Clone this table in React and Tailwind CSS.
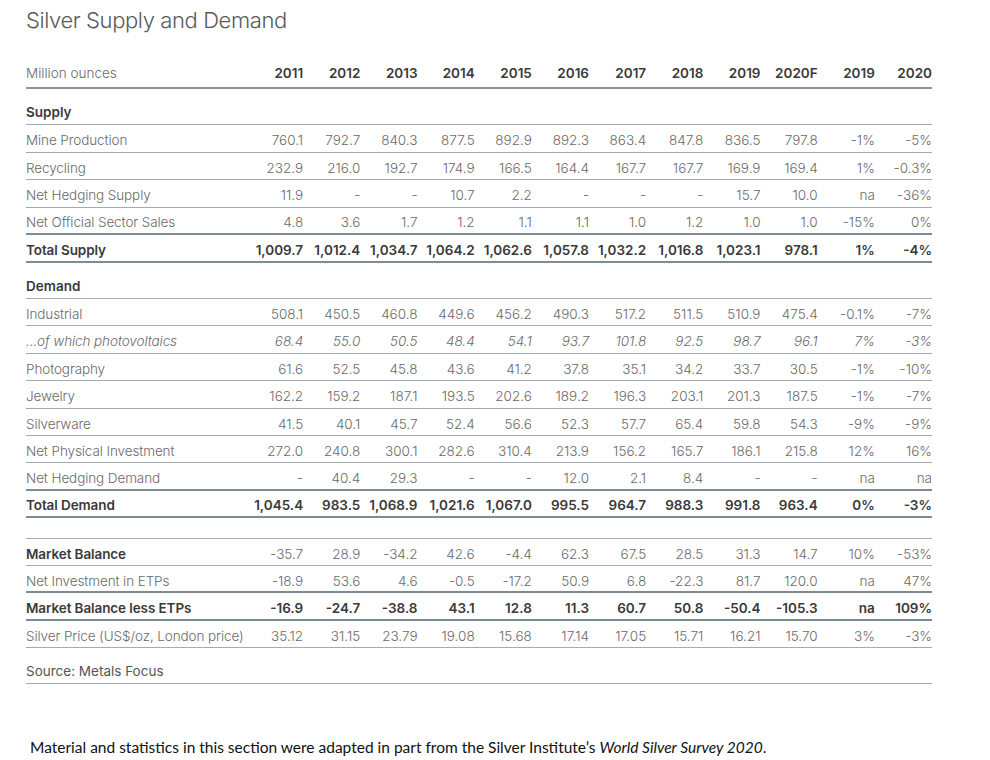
import React from "react";

const years = ["2011", "2012", "2013", "2014", "2015", "2016", "2017", "2018", "2019", "2020F", "2019", "2020"];

const supply = [
  { label: "Mine Production", values: ["760.1", "792.7", "840.3", "877.5", "892.9", "892.3", "863.4", "847.8", "836.5", "797.8", "-1%", "-5%"] },
  { label: "Recycling", values: ["232.9", "216.0", "192.7", "174.9", "166.5", "164.4", "167.7", "167.7", "169.9", "169.4", "1%", "-0.3%"] },
  { label: "Net Hedging Supply", values: ["11.9", "-", "-", "10.7", "2.2", "-", "-", "-", "15.7", "10.0", "na", "-36%"] },
  { label: "Net Official Sector Sales", values: ["4.8", "3.6", "1.7", "1.2", "1.1", "1.1", "1.0", "1.2", "1.0", "1.0", "-15%", "0%"], line: "thick" },
  { label: "Total Supply", values: ["1,009.7", "1,012.4", "1,034.7", "1,064.2", "1,062.6", "1,057.8", "1,032.2", "1,016.8", "1,023.1", "978.1", "1%", "-4%"], bold: true, line: "thick" },
];

const demand = [
  { label: "Industrial", values: ["508.1", "450.5", "460.8", "449.6", "456.2", "490.3", "517.2", "511.5", "510.9", "475.4", "-0.1%", "-7%"] },
  { label: "...of which photovoltaics", values: ["68.4", "55.0", "50.5", "48.4", "54.1", "93.7", "101.8", "92.5", "98.7", "96.1", "7%", "-3%"], italic: true },
  { label: "Photography", values: ["61.6", "52.5", "45.8", "43.6", "41.2", "37.8", "35.1", "34.2", "33.7", "30.5", "-1%", "-10%"] },
  { label: "Jewelry", values: ["162.2", "159.2", "187.1", "193.5", "202.6", "189.2", "196.3", "203.1", "201.3", "187.5", "-1%", "-7%"] },
  { label: "Silverware", values: ["41.5", "40.1", "45.7", "52.4", "56.6", "52.3", "57.7", "65.4", "59.8", "54.3", "-9%", "-9%"] },
  { label: "Net Physical Investment", values: ["272.0", "240.8", "300.1", "282.6", "310.4", "213.9", "156.2", "165.7", "186.1", "215.8", "12%", "16%"] },
  { label: "Net Hedging Demand", values: ["-", "40.4", "29.3", "-", "-", "12.0", "2.1", "8.4", "-", "-", "na", "na"], line: "thick" },
  { label: "Total Demand", values: ["1,045.4", "983.5", "1,068.9", "1,021.6", "1,067.0", "995.5", "964.7", "988.3", "991.8", "963.4", "0%", "-3%"], bold: true, line: "thick" },
];

const balance = [
  { label: "Market Balance", values: ["-35.7", "28.9", "-34.2", "42.6", "-4.4", "62.3", "67.5", "28.5", "31.3", "14.7", "10%", "-53%"], boldLabel: true },
  { label: "Net Investment in ETPs", values: ["-18.9", "53.6", "4.6", "-0.5", "-17.2", "50.9", "6.8", "-22.3", "81.7", "120.0", "na", "47%"], line: "thick" },
  { label: "Market Balance less ETPs", values: ["-16.9", "-24.7", "-38.8", "43.1", "12.8", "11.3", "60.7", "50.8", "-50.4", "-105.3", "na", "109%"], bold: true, line: "thick" },
  { label: "Silver Price (US$/oz, London price)", values: ["35.12", "31.15", "23.79", "19.08", "15.68", "17.14", "17.05", "15.71", "16.21", "15.70", "3%", "-3%"] },
];

const grid = "grid grid-cols-[220px_repeat(12,minmax(0,1fr))] items-center";

function Row({ row, h = "h-[27.4px]" }) {
  const border = row.line === "thick" ? "border-b-2 border-[#7d8b92]" : "border-b border-[#a2acb1]";
  const text = row.bold
    ? "font-semibold text-[#3a3a3a]"
    : row.italic
    ? "font-light italic text-[#6a6a6a]"
    : "font-light text-[#6a6a6a]";
  return (
    <div className={`${grid} ${h} pt-[4px] ${border} ${text}`}>
      <div className={`whitespace-nowrap tracking-[-0.1px] ${row.boldLabel ? "font-semibold text-[#3a3a3a]" : ""}`}>{row.label}</div>
      {row.values.map((v, i) => (
        <div key={i} className="text-right whitespace-nowrap">
          {v}
        </div>
      ))}
    </div>
  );
}

function SectionHead({ children, bold = true }) {
  return (
    <div className="h-[36px] flex items-end pb-[3px] border-b border-[#a2acb1]">
      <span className={`leading-[18px] ${bold ? "font-semibold text-[#3a3a3a]" : "font-normal text-[#555]"}`}>{children}</span>
    </div>
  );
}

export default function App() {
  return (
    <div className="w-[990px] h-[760px] bg-white font-['Inter',sans-serif] text-[13.5px]">
      <div className="pl-[26px] pt-[6px]">
        <h1 className="text-[22px] leading-[28px] font-light text-[#5a5a5a] tracking-[-0.4px]">Silver Supply and Demand</h1>

        <div className="w-[906px] mt-[25px]">
          <div className={`${grid} h-[30px] border-b-2 border-[#8c969b]`}>
            <div className="font-light text-[#6a6a6a]">Million ounces</div>
            {years.map((y, i) => (
              <div key={i} className="text-right font-semibold text-[#3a3a3a]">
                {y}
              </div>
            ))}
          </div>

          <SectionHead>Supply</SectionHead>
          {supply.map((r) => (
            <Row key={r.label} row={r} h="h-[27.6px]" />
          ))}

          <SectionHead>Demand</SectionHead>
          {demand.map((r) => (
            <Row key={r.label} row={r} />
          ))}

          <div className="mt-[20px] border-t border-[#a2acb1]">
            {balance.map((r) => (
              <Row key={r.label} row={r} h="h-[27.2px]" />
            ))}
          </div>

          <SectionHead bold={false}>Source: Metals Focus</SectionHead>
        </div>
      </div>

      <p className="mt-[53px] pl-[30px] font-['Lato',sans-serif] text-[15.5px] leading-[20px] text-[#111]">
        Material and statistics in this section were adapted in part from the Silver Institute’s{" "}
        <i>World Silver Survey 2020</i>.
      </p>
    </div>
  );
}
